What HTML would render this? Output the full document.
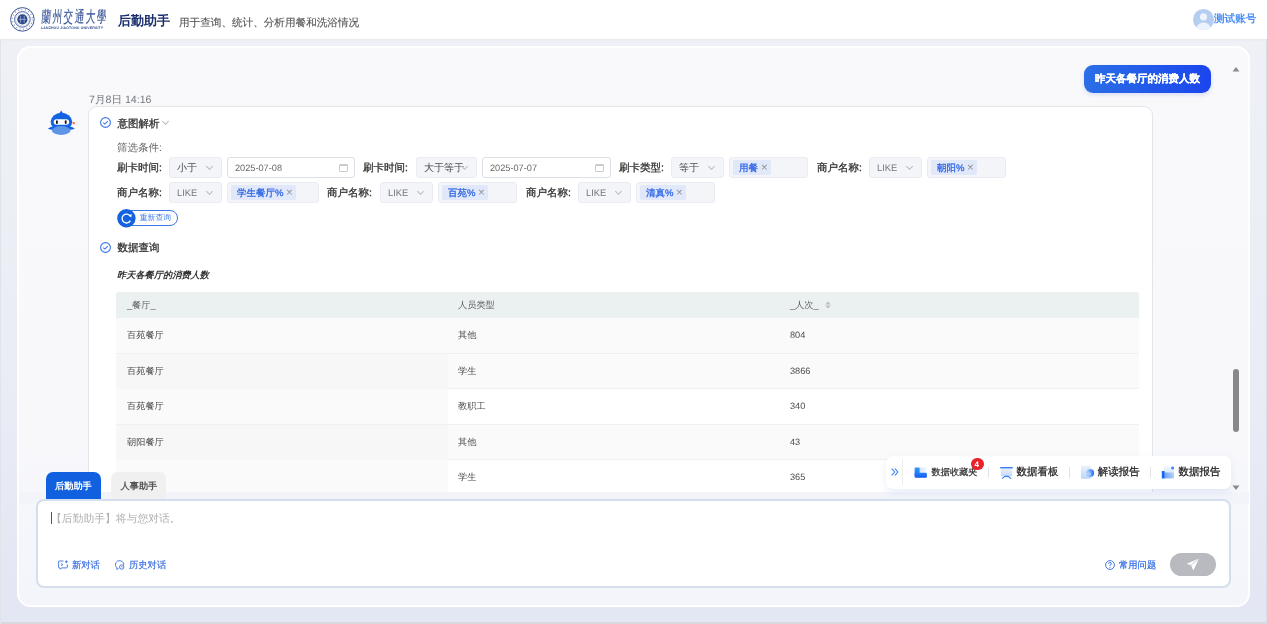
<!DOCTYPE html>
<html><head><meta charset="utf-8">
<style>
*{box-sizing:border-box;margin:0;padding:0}
html,body{width:1267px;height:624px;overflow:hidden}
body{will-change:transform}
body{font-family:"Liberation Sans",sans-serif;text-rendering:geometricPrecision;position:relative;background:linear-gradient(180deg,#eff1f7 0%,#ebedf6 55%,#e3e6f3 100%);color:#333}
.abs{position:absolute}
.t{position:absolute;white-space:nowrap;line-height:1}
#hdr{left:0;top:0;width:1267px;height:39px;background:#fff;box-shadow:0 1px 2px rgba(0,0,0,.04)}
#card{left:17px;top:46px;width:1233px;height:561px;border-radius:14px;background:linear-gradient(180deg,#f9f9fb 0%,#f8f8fb 70%,#f3f5fb 100%);box-shadow:inset 0 0 0 1.8px #fff}
#clip{left:0;top:46px;width:1267px;height:446px;overflow:hidden}
#clip>.in{position:absolute;left:0;top:-46px;width:1267px;height:624px}
.bubble{left:1084px;top:65px;width:127px;height:28px;border-radius:9px;background:linear-gradient(90deg,#2b6fe6,#1b45ee);box-shadow:0 2px 4px rgba(30,70,200,.15)}
.msg{left:88px;top:106px;width:1065px;height:420px;background:#fff;border:1px solid #e3e5e9;border-radius:9px}
.lbl{position:absolute;white-space:nowrap;line-height:1;font-size:10.5px;color:#333;-webkit-text-stroke:0.3px #333}
.sel{position:absolute;height:21px;background:#f3f5f9;border:1px solid #e9ecf1;border-radius:3px}
.sel span{position:absolute;left:7px;top:6px;font-size:10px;line-height:1;color:#4a4a4a;white-space:nowrap}
.sel.lk span{color:#73787f;font-size:9.4px;top:5px}
.chev{position:absolute;top:5.6px;width:5px;height:5px;border-right:1px solid #b8bcc4;border-bottom:1px solid #b8bcc4;transform:rotate(45deg)}
.date{position:absolute;height:21px;background:#fff;border:1px solid #dcdfe6;border-radius:3px}
.date span{position:absolute;left:7px;top:6px;font-size:9.2px;line-height:1;color:#666;white-space:nowrap}
.cal{position:absolute;top:5.5px;width:8.5px;height:8.5px;border:1px solid #c8cbd2;border-radius:1px;box-shadow:inset 0 2px 0 -1px #c8cbd2}
.tagin{position:absolute;height:21px;background:#f3f5f9;border:1px solid #e9ecf1;border-radius:3px}
.tag{position:absolute;top:2px;height:15px;background:#e1e8fa;border-radius:2px}
.tag span{position:absolute;left:6px;top:3.5px;font-size:9.5px;line-height:1;color:#2f66e6;-webkit-text-stroke:0.3px #2f66e6;white-space:nowrap}
.tag i{position:absolute;top:3px;font-style:normal;font-size:11.5px;line-height:1;color:#8f939b}
.tbl{position:absolute;left:116px;top:292px;width:1023px}
.hrow{position:absolute;left:0;top:0;width:1023px;height:26px;background:#ebf0f0;border-radius:3px 3px 0 0}
.row{position:absolute;left:0;width:1023px;height:35.6px;border-bottom:1px solid #f0f0f0}
.cell{position:absolute;top:13px;font-size:9.2px;line-height:1;color:#4a4a4a;white-space:nowrap}
.hrow .cell{top:9px;color:#5f5f5f}
.chk{position:absolute;width:11px;height:11px}
</style></head><body>
<div id="hdr" class="abs">
  <svg class="abs" style="left:9px;top:7px" width="27" height="27" viewBox="0 0 27 27">
    <circle cx="13.4" cy="12.4" r="11.8" fill="none" stroke="#3a5595" stroke-width="1"/>
    <circle cx="13.4" cy="12.4" r="9.9" fill="none" stroke="#7f91c0" stroke-width="1.3" stroke-dasharray="0.9 2.6"/>
    <circle cx="13.4" cy="12.4" r="7.8" fill="none" stroke="#3a5595" stroke-width="0.9"/>
    <circle cx="13.4" cy="12.4" r="6.6" fill="none" stroke="#a9b6d6" stroke-width="0.5"/>
    <circle cx="13.4" cy="12.4" r="5.1" fill="#2f4a8a"/>
    <path d="M11.6 9 V15.8 M15.2 9 V15.8 M10 12.4 H16.8" stroke="#c9d3ea" stroke-width="0.6"/>
  </svg>
  <div class="t" style="left:41.5px;top:10px;font-family:'Liberation Serif',serif;font-size:9.6px;color:#3a5595;-webkit-text-stroke:0.1px #3a5595;letter-spacing:1.45px;transform:scaleY(1.65) skewX(-6deg);transform-origin:0 0">蘭州交通大學</div>
  <div class="t" style="left:41px;top:27px;font-size:3.5px;color:#34508f;letter-spacing:.15px;font-weight:bold">LANZHOU JIAOTONG UNIVERSITY</div>
  <div class="t" style="left:118px;top:13.5px;font-size:13px;font-weight:bold;color:#1a2e6e">后勤助手</div>
  <div class="t" style="left:179px;top:18px;font-size:10.6px;color:#555;-webkit-text-stroke:0.12px #555">用于查询、统计、分析用餐和洗浴情况</div>
  <svg class="abs" style="left:1193px;top:9px" width="21" height="21" viewBox="0 0 21 21">
    <defs><clipPath id="av"><circle cx="10.5" cy="10.5" r="10.5"/></clipPath></defs>
    <circle cx="10.5" cy="10.5" r="10.5" fill="#b6cdf2"/>
    <g clip-path="url(#av)"><circle cx="10.5" cy="7.8" r="3.6" fill="#eef4fd"/><ellipse cx="10.5" cy="19.5" rx="7" ry="6" fill="#eef4fd"/></g>
  </svg>
  <div class="t" style="left:1214px;top:13.5px;font-size:10.6px;font-weight:bold;color:#4f90f4">测试账号</div>
</div>
<div id="card" class="abs"></div>
<div id="clip" class="abs"><div class="in">
<div class="abs bubble"><div class="t" style="left:11px;top:9px;font-size:10.5px;font-weight:bold;color:#fff;-webkit-text-stroke:0.2px #fff">昨天各餐厅的消费人数</div></div>
<div class="t" style="left:89px;top:95px;font-size:10.6px;color:#72787e">7月8日 14:16</div>
<div class="abs msg"></div>
<svg class="chk" style="left:99.8px;top:117.2px" viewBox="0 0 11 11"><circle cx="5.5" cy="5.5" r="4.9" fill="none" stroke="#3b78e7" stroke-width="1.1"/><path d="M3.3 5.6 L4.9 7.1 L7.8 4.1" fill="none" stroke="#3b78e7" stroke-width="1.1"/></svg>
<div class="lbl" style="left:117.5px;top:118.5px">意图解析</div>
<div class="chev" style="left:163px;top:119px;width:5px;height:5px"></div>
<div class="t" style="left:117px;top:142.5px;font-size:10.5px;color:#666">筛选条件:</div>
<div class="lbl" style="left:117px;top:163px">刷卡时间:</div>
<div class="sel" style="left:169px;top:157px;width:53px"><span>小于</span><div class="chev" style="left:37px"></div></div>
<div class="date" style="left:227px;top:157px;width:128px"><span>2025-07-08</span><div class="cal" style="left:111px"></div></div>
<div class="lbl" style="left:363px;top:163px">刷卡时间:</div>
<div class="sel" style="left:416px;top:157px;width:61px"><span>大于等于</span><div class="chev" style="left:45px"></div></div>
<div class="date" style="left:482px;top:157px;width:129px"><span>2025-07-07</span><div class="cal" style="left:112px"></div></div>
<div class="lbl" style="left:619px;top:163px">刷卡类型:</div>
<div class="sel" style="left:671px;top:157px;width:53px"><span>等于</span><div class="chev" style="left:37px"></div></div>
<div class="tagin" style="left:729px;top:157px;width:79px"><div class="tag" style="left:3px;width:38px"><span>用餐</span><i style="left:28px">×</i></div></div>
<div class="lbl" style="left:817px;top:163px">商户名称:</div>
<div class="sel lk" style="left:869px;top:157px;width:53px"><span>LIKE</span><div class="chev" style="left:37px"></div></div>
<div class="tagin" style="left:927px;top:157px;width:79px"><div class="tag" style="left:3px;width:46px"><span>朝阳%</span><i style="left:36px">×</i></div></div>
<div class="lbl" style="left:117px;top:188px">商户名称:</div>
<div class="sel lk" style="left:169px;top:182px;width:53px"><span>LIKE</span><div class="chev" style="left:37px"></div></div>
<div class="tagin" style="left:227px;top:182px;width:92px"><div class="tag" style="left:3px;width:65px"><span>学生餐厅%</span><i style="left:55px">×</i></div></div>
<div class="lbl" style="left:327px;top:188px">商户名称:</div>
<div class="sel lk" style="left:380px;top:182px;width:53px"><span>LIKE</span><div class="chev" style="left:37px"></div></div>
<div class="tagin" style="left:438px;top:182px;width:79px"><div class="tag" style="left:3px;width:46px"><span>百苑%</span><i style="left:36px">×</i></div></div>
<div class="lbl" style="left:526px;top:188px">商户名称:</div>
<div class="sel lk" style="left:578px;top:182px;width:53px"><span>LIKE</span><div class="chev" style="left:37px"></div></div>
<div class="tagin" style="left:636px;top:182px;width:79px"><div class="tag" style="left:3px;width:46px"><span>清真%</span><i style="left:36px">×</i></div></div>
<div class="abs" style="left:124px;top:210px;width:54px;height:15.8px;border:1px solid #3a76e6;border-radius:8px;background:#fff"></div>
<svg class="abs" style="left:117px;top:208.5px" width="19" height="19" viewBox="0 0 19 19"><circle cx="9.4" cy="9.3" r="9.2" fill="#1462e0"/><path d="M13.2 7.2 A4.4 4.4 0 1 0 13.4 11.6" fill="none" stroke="#fff" stroke-width="1.3"/><path d="M11.6 6.6 L14.6 5 L14.4 8.6 Z" fill="#fff"/></svg>
<div class="t" style="left:139.8px;top:213.6px;font-size:7.8px;color:#3f78e6">重新查询</div>
<svg class="chk" style="left:99.8px;top:241.7px" viewBox="0 0 11 11"><circle cx="5.5" cy="5.5" r="4.9" fill="none" stroke="#3b78e7" stroke-width="1.1"/><path d="M3.3 5.6 L4.9 7.1 L7.8 4.1" fill="none" stroke="#3b78e7" stroke-width="1.1"/></svg>
<div class="lbl" style="left:117.5px;top:242.5px">数据查询</div>
<div class="t" style="left:117px;top:271px;font-size:9.2px;font-weight:bold;font-style:italic;color:#333">昨天各餐厅的消费人数</div>
<div class="tbl">
<div class="hrow"><div class="cell" style="left:11px">_餐厅_</div><div class="cell" style="left:342px">人员类型</div><div class="cell" style="left:674px">_人次_</div><svg class="abs" style="left:709px;top:9px" width="6" height="8" viewBox="0 0 6 8"><path d="M0.3 3.4 L3 0.4 L5.7 3.4 Z M0.3 4.6 L3 7.6 L5.7 4.6 Z" fill="#bdbdbd"/></svg></div>
<div class="row" style="top:26.0px;background:#fafafa"><div class="abs" style="left:0;top:0;width:332px;height:35px;background:#fafafa"></div><div class="cell" style="left:11px">百苑餐厅</div><div class="cell" style="left:342px">其他</div><div class="cell" style="left:674px">804</div></div>
<div class="row" style="top:61.6px;background:#fafafa"><div class="abs" style="left:0;top:0;width:332px;height:35px;background:#f7f7f7"></div><div class="cell" style="left:11px">百苑餐厅</div><div class="cell" style="left:342px">学生</div><div class="cell" style="left:674px">3866</div></div>
<div class="row" style="top:97.2px;background:#ffffff"><div class="abs" style="left:0;top:0;width:332px;height:35px;background:#fafafa"></div><div class="cell" style="left:11px">百苑餐厅</div><div class="cell" style="left:342px">教职工</div><div class="cell" style="left:674px">340</div></div>
<div class="row" style="top:132.8px;background:#fafafa"><div class="abs" style="left:0;top:0;width:332px;height:35px;background:#f7f7f7"></div><div class="cell" style="left:11px">朝阳餐厅</div><div class="cell" style="left:342px">其他</div><div class="cell" style="left:674px">43</div></div>
<div class="row" style="top:168.4px;background:#ffffff"><div class="abs" style="left:0;top:0;width:332px;height:35px;background:#fafafa"></div><div class="cell" style="left:11px">朝阳餐厅</div><div class="cell" style="left:342px">学生</div><div class="cell" style="left:674px">365</div></div>
<div class="row" style="top:204.0px;background:#fafafa"><div class="abs" style="left:0;top:0;width:332px;height:35px;background:#f7f7f7"></div><div class="cell" style="left:11px">朝阳餐厅</div><div class="cell" style="left:342px">教职工</div><div class="cell" style="left:674px">20</div></div>
</div>
<svg class="abs" style="left:46px;top:109px" width="32" height="28" viewBox="0 0 32 28">
<path d="M15.2 1.6 L17.8 5.6 L12.6 5.6 Z" fill="#1262e2"/>
<ellipse cx="15.4" cy="12.8" rx="10.8" ry="9" fill="#1262e2"/>
<path d="M1.8 19.8 Q5 17.2 8 17.4 L23 17.4 Q26 17.2 28.8 19.8 Q25.5 21.2 22 20.6 L9 20.6 Q5 21.2 1.8 19.8Z" fill="#1262e2"/>
<ellipse cx="15.2" cy="21.5" rx="9.3" ry="4.4" fill="#5f95e5"/>
<rect x="7.7" y="10.3" width="15.4" height="5.4" rx="2.7" fill="#fff"/>
<rect x="10" y="11.3" width="1.8" height="3.6" rx=".9" fill="#111"/>
<rect x="18.8" y="11.3" width="1.8" height="3.6" rx=".9" fill="#111"/>
<rect x="26.6" y="13" width="2.2" height="2.2" rx=".6" fill="#ff6a3d"/>
</svg>
<svg class="abs" style="left:1232px;top:66px" width="8" height="6" viewBox="0 0 8 6"><path d="M0.5 5.5 L4 1 L7.5 5.5Z" fill="#8a8a8a"/></svg>
<div class="abs" style="left:1233px;top:369px;width:6px;height:63px;border-radius:3px;background:#888"></div>
</div></div>

<div class="abs" style="left:18.5px;top:492px;width:1230px;height:12px;background:#f2f4fa"></div>
<div class="abs" style="left:45.6px;top:472.2px;width:55.4px;height:28.4px;background:#1060e0;border-radius:7px 7px 0 0"></div>
<div class="t" style="left:55px;top:482px;font-size:9.2px;font-weight:bold;color:#fff">后勤助手</div>
<div class="abs" style="left:111.3px;top:472.2px;width:54.7px;height:28.4px;background:#f0f0f0;border-radius:7px 7px 0 0"></div>
<div class="t" style="left:120.5px;top:482px;font-size:9.2px;font-weight:bold;color:#555">人事助手</div>
<div class="abs" style="left:36px;top:498.8px;width:1195px;height:89.2px;background:#fff;border:2px solid #d4deec;border-radius:8px"></div>
<div class="abs" style="left:51px;top:512px;width:1px;height:12px;background:#555"></div>
<div class="t" style="left:51px;top:513.5px;font-size:10.8px;color:#b0b0b0">【后勤助手】将与您对话。</div>
<svg class="abs" style="left:58px;top:560px" width="11" height="10" viewBox="0 0 11 10"><path d="M5.5 1 H1.2 Q0.6 1 0.6 1.6 V7.3 Q0.6 7.9 1.2 7.9 H2 L2.2 9.2 L3.8 7.9 H8.6 Q9.3 7.9 9.3 7.2 V4.5" fill="none" stroke="#3a6fe0" stroke-width="0.9"/><path d="M8.4 0.3 V3.1 M7 1.7 H9.8" stroke="#3a6fe0" stroke-width="0.9"/><path d="M3 3.6 L5 4.6 L3 5.6" fill="none" stroke="#3a6fe0" stroke-width="0.8"/></svg>
<div class="t" style="left:72px;top:561px;font-size:9.3px;color:#3a6fe0;-webkit-text-stroke:0.2px #3a6fe0">新对话</div>
<svg class="abs" style="left:115px;top:560px" width="10" height="10" viewBox="0 0 10 10"><path d="M8.6 5.5 A4.2 4 0 1 0 2.2 8 L1.6 9.3 L3.6 8.6" fill="none" stroke="#3a6fe0" stroke-width="0.9"/><circle cx="6.7" cy="7" r="2.2" fill="#fff" stroke="#3a6fe0" stroke-width="0.9"/><path d="M6.7 6 V7.1 H7.6" fill="none" stroke="#3a6fe0" stroke-width="0.7"/></svg>
<div class="t" style="left:129px;top:561px;font-size:9.3px;color:#3a6fe0;-webkit-text-stroke:0.2px #3a6fe0">历史对话</div>
<svg class="abs" style="left:1105px;top:560px" width="10" height="10" viewBox="0 0 10 10"><circle cx="5" cy="5" r="4.4" fill="none" stroke="#2f6ae6" stroke-width="0.9"/><path d="M3.6 3.9 Q3.6 2.5 5 2.5 Q6.4 2.5 6.4 3.7 Q6.4 4.6 5 5.1 V6" fill="none" stroke="#2f6ae6" stroke-width="0.9"/><circle cx="5" cy="7.3" r="0.55" fill="#2f6ae6"/></svg>
<div class="t" style="left:1119px;top:561px;font-size:9.3px;color:#2f6ae6;-webkit-text-stroke:0.2px #2f6ae6">常用问题</div>
<div class="abs" style="left:1170px;top:552.7px;width:46px;height:23.5px;border-radius:12px;background:#b9babf"></div>
<svg class="abs" style="left:1186px;top:558px" width="14" height="13" viewBox="0 0 14 13"><path d="M13 0.5 L0.8 5.8 L5 7.3 L7.4 12.5 Z" fill="#fff"/><path d="M13 0.5 L5 7.3" stroke="#b9babf" stroke-width="0.7"/></svg>

<div class="abs" style="left:886px;top:456px;width:344.5px;height:32.5px;background:#fff;border-radius:7px;box-shadow:0 3px 7px rgba(70,120,210,.13)"></div>
<svg class="abs" style="left:891px;top:468px" width="8" height="8" viewBox="0 0 8 8"><path d="M0.8 0.6 L3.6 4 L0.8 7.4 M4 0.6 L6.8 4 L4 7.4" fill="none" stroke="#3d86f2" stroke-width="1.15"/></svg>
<div class="abs" style="left:902px;top:459px;width:1px;height:26px;background:#ececec"></div>
<svg class="abs" style="left:914px;top:467px" width="13" height="11" viewBox="0 0 13 11"><defs><linearGradient id="g1p" x1="0" y1="0" x2="1" y2="0"><stop offset="0" stop-color="#cfe2fd"/><stop offset="1" stop-color="#f3f8ff"/></linearGradient><linearGradient id="g1" x1="0" y1="0" x2="0" y2="1"><stop offset="0" stop-color="#2f9af8"/><stop offset="1" stop-color="#1f72f6"/></linearGradient><linearGradient id="g1b" x1="0" y1="0" x2="0" y2="1"><stop offset="0" stop-color="#2380f7"/><stop offset="1" stop-color="#1458f5"/></linearGradient></defs><rect x="4.5" y="0.4" width="8" height="6.5" fill="url(#g1p)"/><rect x="0.6" y="0.4" width="5" height="8" rx="1.2" fill="url(#g1)"/><rect x="0.6" y="5.8" width="12.3" height="5" rx="1.2" fill="url(#g1b)"/></svg>
<div class="t" style="left:931.5px;top:468px;font-size:9.2px;color:#2a2a2a;-webkit-text-stroke:0.2px #2a2a2a">数据收藏夹</div>
<div class="abs" style="left:971.2px;top:458px;width:12.4px;height:12.4px;border-radius:50%;background:#e8212b"></div>
<div class="t" style="left:974.6px;top:460.5px;font-size:8px;font-weight:bold;color:#fff">4</div>
<div class="abs" style="left:987.5px;top:467px;width:1px;height:11px;background:#e3e3e3"></div>
<svg class="abs" style="left:999.5px;top:466.5px" width="13" height="12" viewBox="0 0 13 12"><defs><linearGradient id="g2" x1="0" y1="0" x2="0" y2="1"><stop offset="0" stop-color="#e8f0fd"/><stop offset="1" stop-color="#c5d9fa"/></linearGradient></defs><rect x="0.3" y="0" width="12.4" height="1.6" fill="#2f7af5"/><rect x="0.8" y="1.6" width="11.4" height="7.6" fill="url(#g2)"/><path d="M2.1 11.6 L4.9 9.4 H8.2 L11.1 11.6" fill="none" stroke="#2f7af5" stroke-width="1.1"/></svg>
<div class="t" style="left:1016.6px;top:467px;font-size:10.5px;color:#222;-webkit-text-stroke:0.25px #222">数据看板</div>
<div class="abs" style="left:1068.5px;top:467px;width:1px;height:11px;background:#e3e3e3"></div>
<svg class="abs" style="left:1080px;top:465px" width="15" height="15" viewBox="0 0 15 15"><defs><linearGradient id="g3" x1="0" y1="0" x2="0" y2="1"><stop offset="0" stop-color="#e9f2fe"/><stop offset="1" stop-color="#bcd6fb"/></linearGradient><linearGradient id="g3b" x1="0" y1="0" x2="1" y2="0"><stop offset="0" stop-color="#8dbcf9" stop-opacity=".5"/><stop offset="1" stop-color="#1064f4"/></linearGradient></defs><rect x="0.9" y="0.8" width="9.9" height="12.9" rx="0.8" fill="url(#g3)"/><circle cx="10.2" cy="7.9" r="3.9" fill="url(#g3b)"/><circle cx="9.2" cy="9" r="1.3" fill="none" stroke="#e8f1fe" stroke-width=".6"/></svg>
<div class="t" style="left:1097.8px;top:467px;font-size:10.5px;color:#222;-webkit-text-stroke:0.25px #222">解读报告</div>
<div class="abs" style="left:1149.5px;top:467px;width:1px;height:11px;background:#e3e3e3"></div>
<svg class="abs" style="left:1161px;top:465px" width="15" height="15" viewBox="0 0 15 15"><defs><linearGradient id="g4" x1="0" y1="0" x2="0" y2="1"><stop offset="0" stop-color="#f2f7ff"/><stop offset="1" stop-color="#c9ddfb"/></linearGradient><linearGradient id="g4b" x1="0" y1="0" x2="1" y2="0"><stop offset="0" stop-color="#1a6af5"/><stop offset="1" stop-color="#9cc3fa"/></linearGradient></defs><path d="M3 1.2 H10.6 L13 3.6 V13.2 H3 Z" fill="url(#g4)"/><circle cx="11.6" cy="3" r="1.5" fill="#3c86f7"/><rect x="0.8" y="6" width="2.8" height="7.5" rx=".5" fill="#1565f4"/><rect x="3.4" y="7.5" width="9.6" height="5.9" fill="url(#g4b)" opacity=".55"/></svg>
<div class="t" style="left:1178.6px;top:467px;font-size:10.5px;color:#222;-webkit-text-stroke:0.25px #222">数据报告</div>
<svg class="abs" style="left:1232.2px;top:484.8px" width="8" height="6" viewBox="0 0 8 6"><path d="M0.5 0.5 L4 5 L7.5 0.5Z" fill="#8a8a8a"/></svg>

<div class="abs" style="left:0;top:622px;width:1267px;height:2px;background:#d8d9df"></div>
<div class="abs" style="left:0;top:39px;width:1px;height:585px;background:#e2e3e8"></div>
<div class="abs" style="left:1265.5px;top:39px;width:1.5px;height:585px;background:#dcdde3"></div>

</body></html>
